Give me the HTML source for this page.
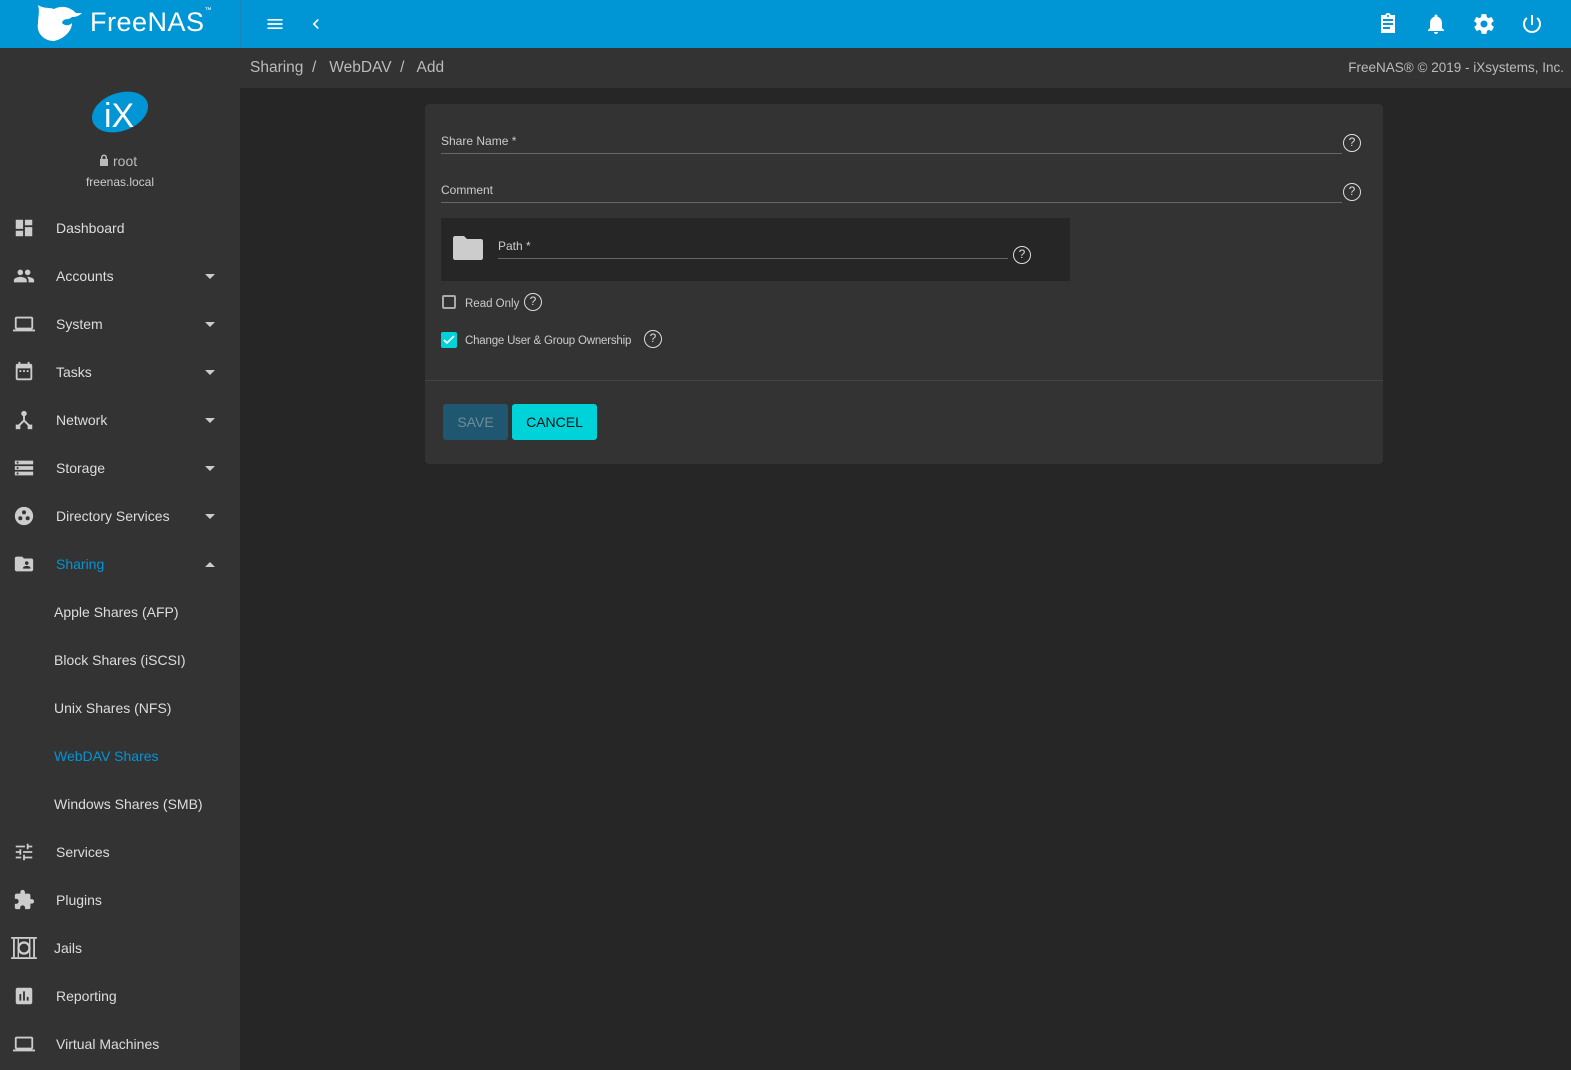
<!DOCTYPE html>
<html><head><meta charset="utf-8"><style>
*{margin:0;padding:0;box-sizing:border-box}
body{width:1571px;height:1070px;background:#262626;font-family:"Liberation Sans",sans-serif;color:#ccc;position:relative;overflow:hidden}
.top{position:absolute;left:0;top:0;width:1571px;height:48px;background:#0095d5}
.top .div{position:absolute;left:240px;top:0;width:1px;height:48px;background:#1a86bd}
.side{position:absolute;left:0;top:48px;width:240px;height:1022px;background:#333}
.crumb{position:absolute;left:240px;top:48px;width:1331px;height:40px;background:#333}
.nav{position:absolute;left:0;width:240px;height:48px;font-size:14px;color:#ddd}
.nav .t{position:absolute;left:56px;top:50%;transform:translateY(-50%)}
.nav svg.i{position:absolute;left:12px;top:13px;width:24px;height:22px}
.nav .ar{position:absolute;left:205px;top:22px;width:0;height:0;border-left:5px solid transparent;border-right:5px solid transparent;border-top:5px solid #ccc}
.nav .up{border-top:0;border-bottom:5px solid #ccc}
.sub .t{left:54px}
.card{position:absolute;left:425px;top:104px;width:958px;height:360px;background:#333;border-radius:4px}
.lbl{position:absolute;font-size:12px;color:#ccc}
.line{position:absolute;height:1px;background:#666}
.help{position:absolute;width:18px;height:18px;border:1.5px solid #ddd;border-radius:50%;font-size:12px;color:#ddd;text-align:center;line-height:15px}
</style></head><body>
<div class="top"><div class="div"></div>
<svg style="position:absolute;left:34px;top:3px" width="52" height="42" viewBox="0 0 52 42"><path d="M4 2 C10 6 14 4 20 6 C28 2 36 4 42 10 L48 10 C44 14 40 14 38 14 C34 18 30 14 28 20 C32 24 36 22 38 20 C38 28 30 36 20 38 C10 38 2 30 4 20 C4 14 6 8 4 2Z" fill="#fff"/></svg>
<div style="position:absolute;left:90px;top:7px;font-size:27px;color:#fff;letter-spacing:0.5px">FreeNAS<span style="font-size:7px;vertical-align:top">™</span></div>
<svg style="position:absolute;left:264px;top:14px" width="22" height="20" viewBox="0 0 24 24"><path d="M3 6h18v2H3zm0 5h18v2H3zm0 5h18v2H3z" fill="#fff"/></svg>
<svg style="position:absolute;left:306px;top:14px" width="20" height="20" viewBox="0 0 24 24"><path d="M15.4 7.4L14 6l-6 6 6 6 1.4-1.4L10.8 12z" fill="#fff"/></svg>
<svg style="position:absolute;left:1376px;top:12px" width="24" height="24" viewBox="0 0 24 24"><path d="M19 3h-4.2C14.4 1.8 13.3 1 12 1s-2.4.8-2.8 2H5v18h14V3zm-7 0c.6 0 1 .4 1 1s-.4 1-1 1-1-.4-1-1 .4-1 1-1zm2 14H7v-2h7v2zm3-4H7v-2h10v2zm0-4H7V7h10v2z" fill="#fff"/></svg>
<svg style="position:absolute;left:1424px;top:12px" width="24" height="24" viewBox="0 0 24 24"><path d="M12 22c1.1 0 2-.9 2-2h-4c0 1.1.9 2 2 2zm6-6v-5c0-3.1-1.6-5.6-4.5-6.3V4c0-.8-.7-1.5-1.5-1.5s-1.5.7-1.5 1.5v.7C7.6 5.4 6 7.9 6 11v5l-2 2v1h16v-1l-2-2z" fill="#fff"/></svg>
<svg style="position:absolute;left:1472px;top:12px" width="24" height="24" viewBox="0 0 24 24"><path d="M19.4 13c0-.3.1-.6.1-1s0-.7-.1-1l2.1-1.6c.2-.2.2-.4.1-.6l-2-3.5c-.1-.2-.4-.3-.6-.2l-2.5 1c-.5-.4-1.1-.7-1.7-1l-.4-2.6c0-.2-.2-.4-.5-.4h-4c-.3 0-.5.2-.5.4l-.4 2.6c-.6.3-1.2.6-1.7 1l-2.5-1c-.2-.1-.5 0-.6.2l-2 3.5c-.1.2 0 .5.1.6L4.6 11c0 .3-.1.6-.1 1s0 .7.1 1l-2.1 1.6c-.2.2-.2.4-.1.6l2 3.5c.1.2.4.3.6.2l2.5-1c.5.4 1.1.7 1.7 1l.4 2.6c0 .2.2.4.5.4h4c.3 0 .5-.2.5-.4l.4-2.6c.6-.3 1.2-.6 1.7-1l2.5 1c.2.1.5 0 .6-.2l2-3.5c.1-.2.1-.5-.1-.6L19.4 13zM12 15.5c-1.9 0-3.5-1.6-3.5-3.5s1.6-3.5 3.5-3.5 3.5 1.6 3.5 3.5-1.6 3.5-3.5 3.5z" fill="#fff"/></svg>
<svg style="position:absolute;left:1520px;top:12px" width="24" height="24" viewBox="0 0 24 24"><path d="M13 3h-2v10h2V3zm4.8 2.2l-1.4 1.4C17.9 7.8 19 9.8 19 12c0 3.9-3.1 7-7 7s-7-3.1-7-7c0-2.2 1.1-4.2 2.6-5.4L6.2 5.2C4.2 6.8 3 9.3 3 12c0 5 4 9 9 9s9-4 9-9c0-2.7-1.2-5.2-3.2-6.8z" fill="#fff"/></svg>
</div>
<div class="side"></div>
<svg style="position:absolute;left:90px;top:89px" width="60" height="46" viewBox="0 0 60 46"><ellipse cx="30" cy="23" rx="29" ry="19" transform="rotate(-20 30 23)" fill="#0095d5"/><text x="14" y="38" font-family="Liberation Sans" font-size="34" fill="#fff">iX</text></svg>
<svg style="position:absolute;left:99px;top:154px" width="10" height="12" viewBox="0 0 10 12"><path d="M2 5V3.5a3 3 0 0 1 6 0V5h1v7H1V5zm1.5 0h3V3.5a1.5 1.5 0 0 0-3 0z" fill="#bbb"/></svg>
<div style="position:absolute;left:113px;top:153px;font-size:14px;color:#bbb">root</div>
<div style="position:absolute;left:0;width:240px;top:175px;text-align:center;font-size:12px;color:#ccc">freenas.local</div>

<div class="nav" style="top:204px"><svg class="i" viewBox="0 0 24 24"><path d="M3 13h8V3H3v10zm0 8h8v-6H3v6zm10 0h8V11h-8v10zm0-18v6h8V3h-8z" fill="#ccc"/></svg><span class="t">Dashboard</span></div>
<div class="nav" style="top:252px"><svg class="i" viewBox="0 0 24 24"><path d="M16 11c1.7 0 3-1.3 3-3s-1.3-3-3-3-3 1.3-3 3 1.3 3 3 3zm-8 0c1.7 0 3-1.3 3-3S9.7 5 8 5 5 6.3 5 8s1.3 3 3 3zm0 2c-2.3 0-7 1.2-7 3.5V19h14v-2.5C15 14.2 10.3 13 8 13zm8 0h-1c1.2.8 2 2 2 3.5V19h6v-2.5c0-2.3-4.7-3.5-7-3.5z" fill="#ccc"/></svg><span class="t">Accounts</span><span class="ar"></span></div>
<div class="nav" style="top:300px"><svg class="i" viewBox="0 0 24 24"><path d="M20 18c1.1 0 2-.9 2-2V6c0-1.1-.9-2-2-2H4c-1.1 0-2 .9-2 2v10c0 1.1.9 2 2 2H0v2h24v-2h-4zM4 6h16v10H4V6z" fill="#ccc"/></svg><span class="t">System</span><span class="ar"></span></div>
<div class="nav" style="top:348px"><svg class="i" viewBox="0 0 24 24"><path d="M19 3h-1V1h-2v2H8V1H6v2H5c-1.1 0-2 .9-2 2v14c0 1.1.9 2 2 2h14c1.1 0 2-.9 2-2V5c0-1.1-.9-2-2-2zm0 16H5V8h14v11zM7 10h2v2H7zm4 0h2v2h-2zm4 0h2v2h-2z" fill="#ccc"/></svg><span class="t">Tasks</span><span class="ar"></span></div>
<div class="nav" style="top:396px"><svg class="i" viewBox="0 0 24 24"><circle cx="12" cy="5" r="3" fill="#ccc"/><path d="M11 7h2v5l6 6-1.5 1.5L12 14l-5.5 5.5L5 18l6-6z" fill="#ccc"/><rect x="3" y="17" width="5" height="5" fill="#ccc"/><rect x="16" y="17" width="5" height="5" fill="#ccc"/></svg><span class="t">Network</span><span class="ar"></span></div>
<div class="nav" style="top:444px"><svg class="i" viewBox="0 0 24 24"><path d="M2 20h20v-4H2v4zm0-16v4h20V4H2zm0 10h20v-4H2v4zM4 5h2v2H4zm0 6h2v2H4zm0 6h2v2H4z" fill="#ccc"/></svg><span class="t">Storage</span><span class="ar"></span></div>
<div class="nav" style="top:492px"><svg class="i" viewBox="0 0 24 24"><circle cx="12" cy="12" r="10" fill="#ccc"/><circle cx="12" cy="8" r="2.2" fill="#333"/><circle cx="8" cy="14.5" r="2.2" fill="#333"/><circle cx="16" cy="14.5" r="2.2" fill="#333"/></svg><span class="t">Directory Services</span><span class="ar"></span></div>
<div class="nav" style="top:540px"><svg class="i" viewBox="0 0 24 24"><path d="M20 6h-8l-2-2H4c-1.1 0-2 .9-2 2v12c0 1.1.9 2 2 2h16c1.1 0 2-.9 2-2V8c0-1.1-.9-2-2-2zm-5 3c1.1 0 2 .9 2 2s-.9 2-2 2-2-.9-2-2 .9-2 2-2zm4 8h-8v-1c0-1.3 2.7-2 4-2s4 .7 4 2v1z" fill="#ccc"/></svg><span class="t" style="color:#0095d5">Sharing</span><span class="ar up"></span></div>
<div class="nav sub" style="top:588px"><span class="t">Apple Shares (AFP)</span></div>
<div class="nav sub" style="top:636px"><span class="t">Block Shares (iSCSI)</span></div>
<div class="nav sub" style="top:684px"><span class="t">Unix Shares (NFS)</span></div>
<div class="nav sub" style="top:732px"><span class="t" style="color:#0095d5">WebDAV Shares</span></div>
<div class="nav sub" style="top:780px"><span class="t">Windows Shares (SMB)</span></div>
<div class="nav" style="top:828px"><svg class="i" viewBox="0 0 24 24"><path d="M3 17v2h6v-2H3zM3 5v2h10V5H3zm10 16v-2h8v-2h-8v-2h-2v6h2zM7 9v2H3v2h4v2h2V9H7zm14 4v-2H11v2h10zm-6-4h2V7h4V5h-4V3h-2v6z" fill="#ccc"/></svg><span class="t">Services</span></div>
<div class="nav" style="top:876px"><svg class="i" viewBox="0 0 24 24"><path d="M20.5 11H19V7c0-1.1-.9-2-2-2h-4V3.5C13 2.1 11.9 1 10.5 1S8 2.1 8 3.5V5H4c-1.1 0-2 .9-2 2v3.8h1.5c1.5 0 2.7 1.2 2.7 2.7S5 16.2 3.5 16.2H2V20c0 1.1.9 2 2 2h3.8v-1.5c0-1.5 1.2-2.7 2.7-2.7s2.7 1.2 2.7 2.7V22H17c1.1 0 2-.9 2-2v-4h1.5c1.4 0 2.5-1.1 2.5-2.5S21.9 11 20.5 11z" fill="#ccc"/></svg><span class="t">Plugins</span></div>
<div class="nav" style="top:924px"><svg class="i" style="left:10px;width:28px" viewBox="0 0 28 24"><rect x="0" y="0" width="28" height="2" fill="#ccc"/><rect x="0" y="22" width="28" height="2" fill="#ccc"/><rect x="2" y="2" width="2" height="20" fill="#ccc"/><rect x="24" y="2" width="2" height="20" fill="#ccc"/><rect x="7" y="2" width="1.5" height="20" fill="#ccc"/><rect x="19.5" y="2" width="1.5" height="20" fill="#ccc"/><circle cx="14" cy="12" r="6" fill="none" stroke="#ccc" stroke-width="2.5"/></svg><span class="t" style="left:54px">Jails</span></div>
<div class="nav" style="top:972px"><svg class="i" viewBox="0 0 24 24"><path d="M19 3H5c-1.1 0-2 .9-2 2v14c0 1.1.9 2 2 2h14c1.1 0 2-.9 2-2V5c0-1.1-.9-2-2-2zM9 17H7v-7h2v7zm4 0h-2V7h2v10zm4 0h-2v-4h2v4z" fill="#ccc"/></svg><span class="t">Reporting</span></div>
<div class="nav" style="top:1020px"><svg class="i" viewBox="0 0 24 24"><path d="M20 18c1.1 0 2-.9 2-2V6c0-1.1-.9-2-2-2H4c-1.1 0-2 .9-2 2v10c0 1.1.9 2 2 2H0v2h24v-2h-4zM4 6h16v10H4V6z" fill="#ccc"/></svg><span class="t">Virtual Machines</span></div>

<div class="crumb"><div style="position:absolute;left:10px;top:11px;font-size:15.5px;color:#bbb">Sharing &nbsp;/&nbsp;&nbsp; WebDAV &nbsp;/&nbsp;&nbsp; Add</div>
<div style="position:absolute;right:7px;top:12px;font-size:13.5px;color:#bbb">FreeNAS® © 2019 - iXsystems, Inc.</div></div>

<div class="card">
<div class="lbl" style="left:16px;top:30px">Share Name *</div>
<div class="line" style="left:16px;top:49px;width:901px"></div>
<div class="help" style="left:918px;top:30px">?</div>
<div class="lbl" style="left:16px;top:79px">Comment</div>
<div class="line" style="left:16px;top:98px;width:901px"></div>
<div class="help" style="left:918px;top:79px">?</div>
<div style="position:absolute;left:16px;top:114px;width:629px;height:63px;background:#262626">
<svg style="position:absolute;left:12px;top:18px" width="30" height="24" viewBox="0 0 30 24"><path d="M2 0h9l3 3h14c1 0 2 1 2 2v17c0 1-1 2-2 2H2c-1 0-2-1-2-2V2c0-1 1-2 2-2z" fill="#ccc"/></svg>
<div class="lbl" style="left:57px;top:21px">Path *</div>
<div class="line" style="left:57px;top:40px;width:510px"></div>
<div class="help" style="left:572px;top:28px">?</div>
</div>
<div style="position:absolute;left:17px;top:191px;width:14px;height:14px;border:2px solid #aaa;border-radius:2px"></div>
<div class="lbl" style="left:40px;top:194px;font-size:11.5px">Read Only</div>
<div class="help" style="left:99px;top:189px">?</div>
<div style="position:absolute;left:16px;top:228px;width:16px;height:16px;background:#00d2d9;border-radius:2px"><svg width="16" height="16" viewBox="0 0 16 16"><path d="M3 8l3 3 7-7" stroke="#fff" stroke-width="1.6" fill="none"/></svg></div>
<div class="lbl" style="left:40px;top:231px;font-size:11.5px;letter-spacing:-0.2px">Change User &amp; Group Ownership</div>
<div class="help" style="left:219px;top:226px">?</div>
<div style="position:absolute;left:0;top:276px;width:958px;height:1px;background:#444"></div>
<div style="position:absolute;left:18px;top:300px;width:65px;height:36px;background:#1f5771;border-radius:3px;color:#6e8c99;font-size:14px;text-align:center;line-height:36px">SAVE</div>
<div style="position:absolute;left:87px;top:300px;width:85px;height:36px;background:#00d2d9;border-radius:3px;color:#111;font-size:14px;text-align:center;line-height:36px">CANCEL</div>
</div>
</body></html>
